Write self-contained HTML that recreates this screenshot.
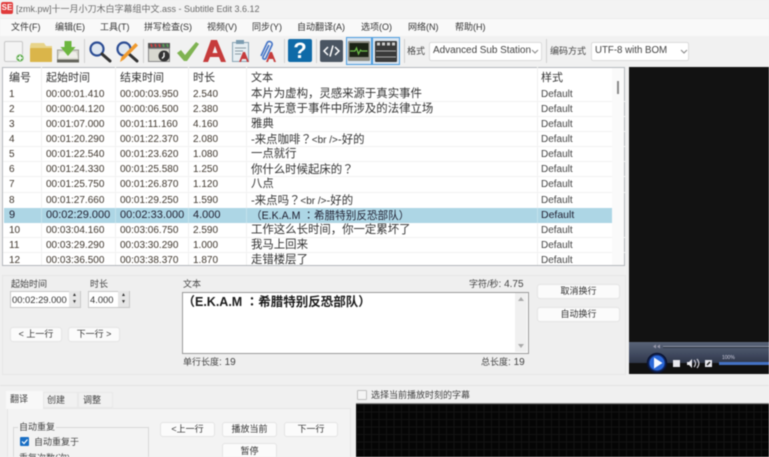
<!DOCTYPE html>
<html><head><meta charset="utf-8">
<style>
html,body{margin:0;padding:0;background:#f0f0f0}
#p{position:relative;width:769px;height:457px;overflow:hidden;background:#f0f0f0;font-family:"Liberation Sans","Noto Sans CJK SC",sans-serif;font-size:9px;color:#222;filter:blur(.45px)}
#p div{position:absolute;white-space:nowrap}
.m{top:20px;font-size:9px;color:#333;line-height:14px}
.r{left:3px;width:610px;height:15px}
.c{top:0;line-height:15px;font-size:10px;color:#40382f}
.t{font-size:11.4px!important;color:#333!important}
.d{color:#444!important}
.s{font-size:11px!important;color:#223!important}
.h{top:70px;font-size:11px;line-height:16px;color:#333}
.sep{background:#f0f0f0;width:1px;top:67px;height:198px}
.sq{background:#c4e2ec;width:1px;top:208px;height:15px}
.hl{left:3px;width:622px;height:1px;background:#f2f2f2}
.btn{background:#fbfbfb;border:1px solid #e4e4e4;border-radius:3px;text-align:center;font-size:9px;color:#333;box-sizing:border-box}
.lb{font-size:9px;color:#444;line-height:14px}
.lb b{font-weight:normal;font-size:10px}
.ts{width:1px;background:#d0d0d0;top:39px;height:24px}
.dd{background:#fff;border:1px solid #dcdcdc;border-radius:2px;box-sizing:border-box;text-align:left;padding-left:3px;line-height:16px;color:#444}
.sp{width:11px;height:16px;background:#e6e6e6;color:#333;font-size:5px;line-height:7px;text-align:center;padding-top:1px;box-sizing:border-box}
.tc{font-family:"Noto Sans CJK TC",sans-serif}
svg{position:absolute;overflow:visible}
</style></head><body><div id="p">

<!-- title bar -->
<div style="left:0;top:0;width:769px;height:18px;background:#f3f3f3"></div>
<div style="left:1px;top:2px;width:12px;height:12px;background:#e03a3a;border-radius:2px;color:#fff;font-size:8px;font-weight:bold;line-height:12px;text-align:center">SE</div>
<div style="left:16px;top:2px;font-size:9px;line-height:14px;color:#6a6a6a">[zmk.pw]十一月小刀木白字幕组中文.ass - Subtitle Edit 3.6.12</div>

<!-- menu -->
<div style="left:0;top:18px;width:769px;height:18px;background:#f9f9f9;border-top:1px solid #ececec;box-sizing:border-box"></div>
<div class="m" style="left:11px">文件(F)</div>
<div class="m" style="left:55px">编辑(E)</div>
<div class="m" style="left:100px">工具(T)</div>
<div class="m" style="left:144px">拼写检查(S)</div>
<div class="m" style="left:207px">视频(V)</div>
<div class="m" style="left:252px">同步(Y)</div>
<div class="m" style="left:297px">自动翻译(A)</div>
<div class="m" style="left:361px">选项(O)</div>
<div class="m" style="left:408px">网络(N)</div>
<div class="m" style="left:455px">帮助(H)</div>

<!-- toolbar -->
<div style="left:0;top:36px;width:769px;height:31px;background:#f1f1f1"></div>
<div class="ts" style="left:84px"></div><div class="ts" style="left:143px"></div><div class="ts" style="left:284px"></div><div class="ts" style="left:316px"></div><div class="ts" style="left:404px"></div><div class="ts" style="left:546px"></div>

<svg style="left:0;top:36px" width="420" height="30" viewBox="0 0 420 30">
 <!-- new -->
 <rect x="4.5" y="5.5" width="18" height="20" rx="1.5" fill="#f4f4f4" stroke="#c8c8c8"/>
 <circle cx="20" cy="22" r="4" fill="#5aa84a" stroke="#e8f0e4"/><path d="M17.5 22h5M20 19.500v5" stroke="#fff" stroke-width="1.500"/>
 <!-- folder -->
 <path d="M30 10l1-3h13l2 3h6v16H30z" fill="#e8d48a"/><rect x="30" y="12" width="22" height="14" rx="1" fill="#dab54a"/>
 <!-- save -->
 <path d="M57.500 14h21v12H57.500z" fill="#d6d6cc" stroke="#a0a098"/><path d="M60 16h16l2 6H58z" fill="#eeeee8"/><rect x="57" y="23.500" width="22" height="3" fill="#66665e"/>
 <path d="M64.500 5h7v6h4l-7.500 9-7.500-9h4z" fill="#6cb63e"/>
 <!-- search -->
 <circle cx="97" cy="13" r="6.500" fill="#dfe7f0" stroke="#2c4d94" stroke-width="2.200"/><path d="M102 18l8 7" stroke="#333" stroke-width="3" stroke-linecap="round"/>
 <!-- replace -->
 <circle cx="124" cy="13" r="6.500" fill="#dfe7f0" stroke="#2c4d94" stroke-width="2.200"/><path d="M129 18l8 7" stroke="#333" stroke-width="3" stroke-linecap="round"/>
 <path d="M120 26l1.500-5 14-14 2.500 2.500-14 14z" fill="#ef9a2e"/>
 <!-- clapper -->
 <rect x="148.500" y="12.500" width="21" height="13" fill="#d8d8d0" stroke="#888"/><rect x="148" y="7" width="22" height="5" fill="#555"/>
 <path d="M151 8l1 3M155 8l1 3M159 8l1 3" stroke="#e04040" stroke-width="1.500"/><path d="M163 8l1 3M167 8l1 3" stroke="#5a5" stroke-width="1.500"/>
 <circle cx="164" cy="20" r="5.500" fill="#333"/><path d="M164 16.500v4l-2 2" stroke="#fff" stroke-width="1.300" fill="none"/>
 <!-- check -->
 <path d="M177 17l4-3 4 5 11-13 3 2-12 17h-3z" fill="#7fb352"/>
 <!-- A -->
 <path d="M203 26l8-22h6l9 22h-5l-2-5h-9l-2 5zM212.500 17h5l-2.500-7z" fill="#c63c3c" fill-rule="evenodd"/>
 <!-- doc A -->
 <rect x="232.500" y="6.500" width="16" height="19" fill="#e6eef2" stroke="#8aa4b4"/><rect x="236" y="4" width="8" height="4" fill="#7c9cb0"/>
 <path d="M235 12h11M235 15h8M235 18h6" stroke="#8a9aa4"/>
 <path d="M239 26l4-10h2l4 10h-2l-1-3h-4l-1 3z" fill="#c63c3c"/>
 <!-- clip A -->
 <path d="M261 20l6-13c1.500-3 6-1 5 2l-6 13c-1 2-4 1-3-1l6-12" fill="none" stroke="#4a78c8" stroke-width="1.700"/>
 <path d="M266 26l4-10h2l4 10h-2l-1-3h-4l-1 3z" fill="#c63c3c"/>
 <!-- help -->
 <rect x="288" y="3" width="24" height="23" rx="2" fill="#0f6aa8"/>
 <!-- code -->
 <rect x="320" y="4" width="23" height="22" rx="2" fill="#4a5562"/>
 <path d="M328 11l-4 4 4 4M335 11l4 4-4 4M333 9.500l-3 11" fill="none" stroke="#fff" stroke-width="1.500"/>
 <!-- wave -->
 <rect x="346.500" y="1.500" width="25" height="27" fill="#dbe6f0" stroke="#4a9ce0"/>
 <rect x="348" y="5" width="22" height="20" rx="1" fill="#8e8e84"/><rect x="349.500" y="7" width="19" height="14" fill="#1c2416"/>
 <path d="M350 15h5l1.500-3 2 6 2-4 1 1h6" fill="none" stroke="#6ec04a" stroke-width="1.200"/>
 <!-- clap -->
 <rect x="372.500" y="1.500" width="27" height="27" fill="#dbe6f0" stroke="#4a9ce0"/>
 <rect x="375" y="5" width="22" height="21" rx="1" fill="#3a3a3a"/>
 <path d="M377 8h3M382 8h3M387 8h3M392 8h3" stroke="#ccc" stroke-width="3"/><path d="M376 15h20M376 21h20" stroke="#aaa"/>
</svg>
<div style="left:288px;top:38px;width:24px;text-align:center;font-size:22px;font-weight:bold;line-height:26px;color:#fff">?</div>

<div class="lb" style="left:407px;top:44px">格式</div>
<div class="dd" style="left:429px;top:42px;width:113px;height:19px;font-size:10px;letter-spacing:-.05px">Advanced Sub Station</div>
<svg style="left:531px;top:49px" width="8" height="5"><path d="M1 1l3 3 3-3" fill="none" stroke="#888"/></svg>
<div class="lb" style="left:550px;top:44px">编码方式</div>
<div class="dd" style="left:591px;top:42px;width:98px;height:19px;font-size:9.700px">UTF-8 with BOM</div>
<svg style="left:680px;top:49px" width="8" height="5"><path d="M1 1l3 3 3-3" fill="none" stroke="#888"/></svg>

<!-- table -->
<div style="left:2px;top:67px;width:623px;height:199px;background:#fff;border:1px solid #b4b8bc;box-sizing:border-box"></div>
<div class="h" style="left:9px">编号</div><div class="h" style="left:46px">起始时间</div><div class="h" style="left:120px">结束时间</div><div class="h" style="left:193px">时长</div><div class="h" style="left:251px">文本</div><div class="h" style="left:541px">样式</div>
<div class="sep" style="left:41px"></div><div class="sep" style="left:115px"></div><div class="sep" style="left:188px"></div><div class="sep" style="left:246px"></div><div class="sep" style="left:537px"></div>
<div class="hl" style="top:101px"></div><div class="hl" style="top:116px"></div><div class="hl" style="top:131px"></div><div class="hl" style="top:146px"></div><div class="hl" style="top:161px"></div><div class="hl" style="top:176px"></div><div class="hl" style="top:192px"></div><div class="hl" style="top:237px"></div><div class="hl" style="top:252px"></div>

<div style="left:4px;top:208px;width:608px;height:15px;background:#add6e5"></div>
<div class="sq" style="left:41px"></div><div class="sq" style="left:115px"></div><div class="sq" style="left:188px"></div><div class="sq" style="left:246px"></div><div class="sq" style="left:537px"></div>

<div class="r" style="top:87px"><div class="c" style="left:6px">1</div><div class="c" style="left:43px">00:00:01.410</div><div class="c" style="left:117px">00:00:03.950</div><div class="c" style="left:190px">2.540</div><div class="c t" style="left:248px">本片为虚构，灵感来源于真实事件</div><div class="c d" style="left:538px">Default</div></div>
<div class="r" style="top:102px"><div class="c" style="left:6px">2</div><div class="c" style="left:43px">00:00:04.120</div><div class="c" style="left:117px">00:00:06.500</div><div class="c" style="left:190px">2.380</div><div class="c t" style="left:248px">本片无意于事件中所涉及的法律立场</div><div class="c d" style="left:538px">Default</div></div>
<div class="r" style="top:117px"><div class="c" style="left:6px">3</div><div class="c" style="left:43px">00:01:07.000</div><div class="c" style="left:117px">00:01:11.160</div><div class="c" style="left:190px">4.160</div><div class="c t" style="left:248px">雅典</div><div class="c d" style="left:538px">Default</div></div>
<div class="r" style="top:132px"><div class="c" style="left:6px">4</div><div class="c" style="left:43px">00:01:20.290</div><div class="c" style="left:117px">00:01:22.370</div><div class="c" style="left:190px">2.080</div><div class="c t" style="left:248px">-来点咖啡<span class="tc">？</span><span style="font-size:10px">&lt;br /&gt;</span>-好的</div><div class="c d" style="left:538px">Default</div></div>
<div class="r" style="top:147px"><div class="c" style="left:6px">5</div><div class="c" style="left:43px">00:01:22.540</div><div class="c" style="left:117px">00:01:23.620</div><div class="c" style="left:190px">1.080</div><div class="c t" style="left:248px">一点就行</div><div class="c d" style="left:538px">Default</div></div>
<div class="r" style="top:162px"><div class="c" style="left:6px">6</div><div class="c" style="left:43px">00:01:24.330</div><div class="c" style="left:117px">00:01:25.580</div><div class="c" style="left:190px">1.250</div><div class="c t" style="left:248px">你什么时候起床的<span class="tc">？</span></div><div class="c d" style="left:538px">Default</div></div>
<div class="r" style="top:177px"><div class="c" style="left:6px">7</div><div class="c" style="left:43px">00:01:25.750</div><div class="c" style="left:117px">00:01:26.870</div><div class="c" style="left:190px">1.120</div><div class="c t" style="left:248px">八点</div><div class="c d" style="left:538px">Default</div></div>
<div class="r" style="top:193px"><div class="c" style="left:6px">8</div><div class="c" style="left:43px">00:01:27.660</div><div class="c" style="left:117px">00:01:29.250</div><div class="c" style="left:190px">1.590</div><div class="c t" style="left:248px">-来点吗<span class="tc">？</span><span style="font-size:10px">&lt;br /&gt;</span>-好的</div><div class="c d" style="left:538px">Default</div></div>
<div class="r" style="top:208px"><div class="c s" style="left:6px">9</div><div class="c s" style="left:43px">00:02:29.000</div><div class="c s" style="left:117px">00:02:33.000</div><div class="c s" style="left:190px">4.000</div><div class="c s" style="left:248px;font-size:10.600px!important">（E.K.A.M <span class="tc">：</span>希腊特别反恐部队）</div><div class="c s" style="left:538px;font-size:10.500px!important">Default</div></div>
<div class="r" style="top:223px"><div class="c" style="left:6px">10</div><div class="c" style="left:43px">00:03:04.160</div><div class="c" style="left:117px">00:03:06.750</div><div class="c" style="left:190px">2.590</div><div class="c t" style="left:248px">工作这么长时间，你一定累坏了</div><div class="c d" style="left:538px">Default</div></div>
<div class="r" style="top:238px"><div class="c" style="left:6px">11</div><div class="c" style="left:43px">00:03:29.290</div><div class="c" style="left:117px">00:03:30.290</div><div class="c" style="left:190px">1.000</div><div class="c t" style="left:248px">我马上回来</div><div class="c d" style="left:538px">Default</div></div>
<div class="r" style="top:253px;height:12px;overflow:hidden"><div class="c" style="left:6px">12</div><div class="c" style="left:43px">00:03:36.500</div><div class="c" style="left:117px">00:03:38.370</div><div class="c" style="left:190px">1.870</div><div class="c t" style="left:248px">走错楼层了</div><div class="c d" style="left:538px">Default</div></div>

<!-- scrollbar -->
<div style="left:612px;top:68px;width:12px;height:197px;background:#fafafa"></div>
<div style="left:617px;top:81px;width:2px;height:13px;background:#8a8a8a"></div>

<!-- edit panel -->
<div style="left:2px;top:275px;width:624px;height:100px;border:1px solid #e6e6e6;box-sizing:border-box;background:#efefef"></div>
<div class="lb" style="left:11px;top:277px">起始时间</div>
<div class="lb" style="left:90px;top:277px">时长</div>
<div style="left:10px;top:291px;width:71px;height:17px;background:#fff;border:1px solid #c8c8c8;box-sizing:border-box;font-size:9.400px;line-height:15px;padding-left:1px;color:#333">00:02:29.000</div>
<div class="sp" style="left:69px;top:291px">▲<br>▼</div>
<div style="left:88px;top:291px;width:42px;height:17px;background:#fff;border:1px solid #c8c8c8;box-sizing:border-box;font-size:9.400px;line-height:15px;padding-left:1px;color:#333">4.000</div>
<div class="sp" style="left:118px;top:291px">▲<br>▼</div>
<div class="btn" style="left:10px;top:327px;width:52px;height:15px;line-height:13px">&lt; 上一行</div>
<div class="btn" style="left:68px;top:327px;width:52px;height:15px;line-height:13px">下一行 &gt;</div>

<div class="lb" style="left:183px;top:277px">文本</div>
<div class="lb" style="left:469px;top:277px">字符/秒<b>: 4.75</b></div>
<div style="left:181.500px;top:291.500px;width:347px;height:62px;background:#fff;border:1px solid #9a9a9a;box-sizing:border-box;border-width:1px 1.500px 1.500px 1px"></div>
<div style="left:515px;top:293px;width:12px;height:59px;background:#f0f0f0"></div>
<svg style="left:517px;top:296px" width="8" height="54"><path d="M1 5l3-4 3 4z" fill="#aaa"/><path d="M1 48l3 4 3-4z" fill="#aaa"/></svg>
<div style="left:182.500px;top:293px;font-size:12.500px;font-weight:bold;line-height:16px;color:#1a1a1a">（E.K.A.M <span class="tc">：</span>希腊特别反恐部队）</div>
<div class="lb" style="left:183px;top:355px">单行长度<b>: 19</b></div>
<div class="lb" style="left:481px;top:355px">总长度<b>: 19</b></div>
<div class="btn" style="left:537px;top:284px;width:83px;height:15px;line-height:13px">取消换行</div>
<div class="btn" style="left:537px;top:307px;width:83px;height:15px;line-height:13px">自动换行</div>

<!-- video -->
<div style="left:629px;top:67px;width:140px;height:307px;background:#121212"></div>
<div style="left:629px;top:342px;width:140px;height:22px;background:linear-gradient(#5a6478,#404a60 55%,#2e3446)"></div>
<div style="left:629px;top:363px;width:140px;height:11px;background:#111"></div>
<div style="left:663px;top:346px;width:106px;height:1px;background:#8a92a2"></div>
<div style="left:663px;top:347px;width:106px;height:1px;background:#2c3240"></div>
<svg style="left:629px;top:342px" width="140" height="33">
 <path d="M27 2.500l-3 2 3 2zM31 2.500l-3 2 3 2z" fill="#99a"/>
 <circle cx="28" cy="21" r="9.500" fill="#122a6a" stroke="#0b1432" stroke-width="1.500"/>
 <circle cx="28" cy="21" r="7.500" fill="#2a68d8"/>
 <path d="M25 15.500l8.500 5.500-8.500 5.500z" fill="#f4f8ff"/>
 <rect x="44" y="18" width="7" height="7" fill="#e8e8ee"/>
 <path d="M58 20h2l3-3v9l-3-3h-2z" fill="#e8e8ee"/><path d="M65 18c2 2 2 5 0 7M68 17c2.500 3 2.500 6 0 9" stroke="#c8c8d0" fill="none" stroke-width="1.200"/>
 <rect x="76" y="18" width="7" height="7" fill="#e8e8ee"/><path d="M78 23l3-3" stroke="#222" stroke-width="1.500"/>
 <rect x="90" y="20" width="50" height="3" fill="#4472c4"/>
</svg>
<div style="left:722px;top:355px;font-size:5px;line-height:6px;color:#ccd">100%</div>

<!-- bottom -->
<div style="left:0;top:384.500px;width:769px;height:1px;background:#e2e2e2"></div>
<div style="left:7px;top:408px;width:344px;height:60px;background:#f3f3f3;border:1px solid #e6e6e6;box-sizing:border-box"></div>
<div style="left:6px;top:391px;width:37px;height:18px;background:#f8f8f8"></div>
<div style="left:43px;top:392px;width:35px;height:16px;background:#f1f1f1;border:1px solid #e8e8e8;box-sizing:border-box"></div>
<div style="left:78px;top:392px;width:35px;height:16px;background:#f1f1f1;border:1px solid #e8e8e8;box-sizing:border-box"></div>
<div class="lb" style="left:10px;top:392px">翻译</div>
<div class="lb" style="left:47px;top:393px">创建</div>
<div class="lb" style="left:83px;top:393px">调整</div>
<div style="left:13px;top:427px;width:136px;height:40px;border:1px solid #d8d8d8;box-sizing:border-box"></div>
<div class="lb" style="left:18px;top:420px;background:#f3f3f3;padding:0 1px">自动重复</div>
<div style="left:20px;top:437px;width:9px;height:9px;background:#1a6fc4;border-radius:1px"></div>
<svg style="left:20px;top:437px" width="9" height="9"><path d="M2 4.500l2 2 3.500-4" fill="none" stroke="#fff" stroke-width="1.200"/></svg>
<div class="lb" style="left:34px;top:435px">自动重复于</div>
<div class="lb" style="left:19px;top:451px">重复次数(次)</div>
<div class="btn" style="left:160px;top:422px;width:55px;height:15px;line-height:13px">&lt;上一行</div>
<div class="btn" style="left:222px;top:422px;width:55px;height:15px;line-height:13px">播放当前</div>
<div class="btn" style="left:284px;top:422px;width:54px;height:15px;line-height:13px">下一行</div>
<div class="btn" style="left:222px;top:443px;width:55px;height:16px;line-height:14px">暂停</div>

<div style="left:357px;top:390px;width:8px;height:8px;background:#f4f4f4;border:1px solid #c0c0c0;border-radius:1px"></div>
<div class="lb" style="left:371px;top:388px">选择当前播放时刻的字幕</div>
<div style="left:356px;top:403px;width:413px;height:54px;background:#050505;background-image:linear-gradient(#131313 1px,transparent 1px),linear-gradient(90deg,#131313 1px,transparent 1px);background-size:7.500px 7.500px;border-top:1px solid #888;box-sizing:border-box"></div>

</div></body></html>
